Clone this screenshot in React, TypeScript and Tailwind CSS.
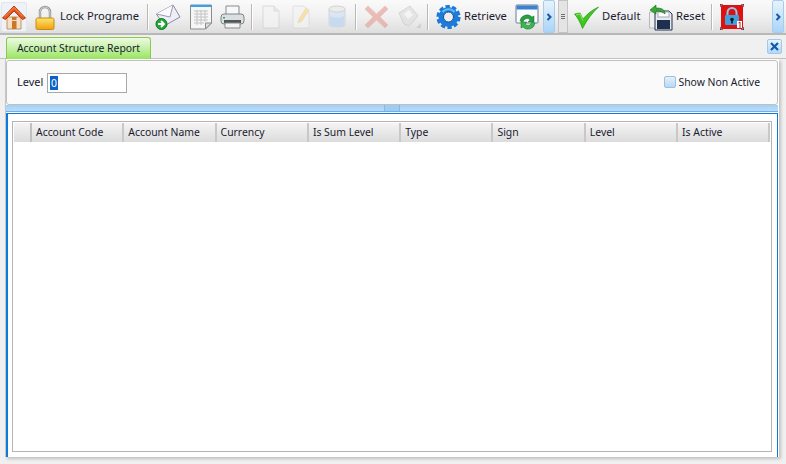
import React from "react";

const Home = () => (
  <svg width="24" height="26" viewBox="0 0 24 26">
    <path d="M5 13h14v12H5z" fill="#f6dfc4" stroke="#c09468" />
    <path d="M0.500 14 12 2l11.500 12-3 1.500L12 7 3.500 15.500z" fill="#e8541c" stroke="#b5400f" />
    <path d="M12 4 4 12l-2 1L12 3l10 10-2-1z" fill="#f89868" />
    <rect x="10" y="17" width="4.500" height="8" fill="#c87828" />
    <rect x="10" y="13" width="4.500" height="3" fill="#c87828" />
  </svg>
);
const Lock = () => (
  <svg width="20" height="26" viewBox="0 0 20 26">
    <path d="M5 14V8a5 5 0 0 1 10 0v6" fill="none" stroke="#8f8f8f" strokeWidth="2.400" />
    <path d="M5 14V8a5 5 0 0 1 10 0v6" fill="none" stroke="#e4e4e4" strokeWidth="0.800" />
    <defs>
      <linearGradient id="lk" x1="0" y1="0" x2="0" y2="1">
        <stop offset="0" stopColor="#fde66e" />
        <stop offset="1" stopColor="#f0a010" />
      </linearGradient>
    </defs>
    <rect x="1" y="14" width="18" height="11.500" rx="1.500" fill="url(#lk)" stroke="#c88a10" />
  </svg>
);
const Mail = () => (
  <svg width="26" height="28" viewBox="0 0 26 28">
    <path d="M1.500 11 18 2l7 12-16 9z" fill="#eeeef8" stroke="#8a8aa0" />
    <path d="M1.500 11 15 14l3-12" fill="#fbfbff" stroke="#9a9ab0" />
    <circle cx="6.500" cy="21" r="5.500" fill="#22a838" stroke="#0c7a20" />
    <path d="M3 21h5M6 18l3 3-3 3" stroke="#fff" strokeWidth="1.800" fill="none" />
  </svg>
);
const Sheet = () => (
  <svg width="24" height="28" viewBox="0 0 24 28">
    <path d="M1.500 2h21v18l-6 6h-15z" fill="#f6f6f6" stroke="#8c8c8c" />
    <rect x="2" y="2" width="20" height="2" fill="#3aa0e8" />
    <path d="M5 8h14M5 11h14M5 14h14M5 17h14M5 20h10M8 7v15M12 7v15M16 7v12" stroke="#c4c4c4" strokeWidth="1" />
    <path d="M16.500 26v-6h6z" fill="#dcdcdc" stroke="#8c8c8c" />
  </svg>
);
const Printer = () => (
  <svg width="25" height="26" viewBox="0 0 25 26">
    <path d="M6 11V2h13v9" fill="#f8f8f8" stroke="#8a8a8a" />
    <rect x="1" y="10" width="23" height="10" rx="3" fill="#dcdfe2" stroke="#7e8488" />
    <rect x="4" y="16" width="17" height="3" fill="#50585c" />
    <path d="M5 19h15v5H5z" fill="#f4f4f4" stroke="#8a8a8a" />
    <rect x="3" y="13" width="2" height="1.500" fill="#36b040" />
  </svg>
);
const Doc = () => (
  <svg width="18" height="26" viewBox="0 0 18 26" opacity="0.7">
    <path d="M1 2h11l5 5v17H1z" fill="#f4f4f4" stroke="#d0d0d0" />
    <path d="M12 2v5h5" fill="#e4e4e4" stroke="#d0d0d0" />
  </svg>
);
const PencilDoc = () => (
  <svg width="24" height="26" viewBox="0 0 24 26" opacity="0.7">
    <path d="M1 2h11l5 5v17H1z" fill="#f4f4f4" stroke="#d8d8d8" />
    <path d="M6 19l1-4 7-11 3 2-7 11z" fill="#f6dc8c" stroke="#e8d8a8" />
    <path d="M17 20h6v3h-6z" fill="#e8e8e8" />
  </svg>
);
const Cyl = () => (
  <svg width="18" height="26" viewBox="0 0 18 26">
    <path d="M1 5v16c0 2.500 16 2.500 16 0V5z" fill="#dce6f2" stroke="#d0d4d8" />
    <ellipse cx="9" cy="5" rx="8" ry="3" fill="#ececec" stroke="#d0d4d8" />
    <path d="M2 12c4 2 10 2 14 0v9c-3 2-11 2-14 0z" fill="#c8daf0" />
  </svg>
);
const XIcon = () => (
  <svg width="23" height="24" viewBox="0 0 23 24" opacity="0.6">
    <path d="M3 1 11.500 9 20 1l3 3-8 8 8 8-3 3-8.500-8L3 23l-3-3 8-8-8-8z" fill="#e89890" stroke="#d8b0a8" />
  </svg>
);
const Floppy = () => (
  <svg width="24" height="26" viewBox="0 0 24 26" opacity="0.7">
    <path d="M1 9 12 2l8 10-9 10-5-2z" fill="#e0e0e0" stroke="#c8c8c8" />
    <path d="M6 10l5-4 4 5-5 4z" fill="#f6f6f6" />
    <path d="M18 24l5-5v5z" fill="#c8c8c8" />
  </svg>
);
const Gear = () => (
  <svg width="25" height="26" viewBox="0 0 25 26">
    <circle cx="12.500" cy="13" r="10.400" fill="none" stroke="#1a78d8" strokeWidth="3.400" strokeDasharray="4.200 2.340" />
    <circle cx="12.500" cy="13" r="7.500" fill="none" stroke="#1c7cdc" strokeWidth="5" />
    <circle cx="12.500" cy="13" r="5" fill="#eeeeee" stroke="#0f4c90" />
    <path d="M6.500 8a7.800 7.800 0 0 1 12 0" stroke="#60bcf8" strokeWidth="2" fill="none" />
  </svg>
);
const Win = () => (
  <svg width="24" height="28" viewBox="0 0 24 28">
    <rect x="1" y="2" width="22" height="18" rx="1" fill="#fafcff" stroke="#6a7c94" />
    <rect x="1.500" y="2.500" width="21" height="4" fill="#3c80d0" />
    <path d="M5 18a7 7 0 0 1 12-4l2-1v6h-6l2-2a4 4 0 0 0-7 2z" fill="#28a040" stroke="#187028" strokeWidth="0.500" />
    <path d="M20 20a7 7 0 0 1-12 4l-2 1v-6h6l-2 2a4 4 0 0 0 7-2z" fill="#38b850" stroke="#187028" strokeWidth="0.500" />
  </svg>
);
const Check = () => (
  <svg width="25" height="24" viewBox="0 0 25 24">
    <path d="M0.500 9 6 8l3 6C13 9 18 5 24.500 2 18 8 13 15 8.500 23.500 6.500 18 4 13 0.500 9z" fill="#3cc81c" stroke="#1c8c10" strokeWidth="0.600" />
    <path d="M2 10l4-1 3 6.500" fill="none" stroke="#90ec60" />
  </svg>
);
const ResetIcon = () => (
  <svg width="24" height="28" viewBox="0 0 24 28">
    <path d="M0.500 9h8v16h-8z" fill="#f0f0f0" stroke="#b8b8b8" />
    <path d="M6 8h14l3 3v16H6z" fill="#e8eaf0" stroke="#20304c" />
    <rect x="8" y="17" width="13" height="9" fill="#1e3050" />
    <rect x="9" y="9" width="11" height="5" fill="#fff" stroke="#a0a8b8" />
    <path d="M1 7l6-5v3c5 0 9 1 9 6-2-2-5-3-9-3v3z" fill="#38a838" stroke="#186818" strokeWidth="0.600" />
  </svg>
);
const RedLock = () => (
  <svg width="24" height="26" viewBox="0 0 24 26">
    <rect x="1" y="1" width="22" height="24" rx="1" fill="#e01010" />
    <path d="M0 3V0h3M21 0h3v3M0 23v3h3M21 26h3v-3" stroke="#000" fill="none" />
    <path d="M7.500 12V8.500a4.500 4.500 0 0 1 9 0V12" fill="none" stroke="#8cc8ec" strokeWidth="2" />
    <rect x="5" y="11" width="14" height="10" rx="1" fill="#40a0dc" />
    <circle cx="12" cy="15.500" r="1.800" fill="#101820" />
    <rect x="11.200" y="15.500" width="1.600" height="4" fill="#101820" />
    <rect x="17" y="17" width="5" height="7" fill="#fff" />
    <path d="M18.500 19l1.500-1v6" stroke="#e01010" fill="none" />
  </svg>
);
const Chevrons = () => (
  <svg width="7" height="8" viewBox="0 0 7 8">
    <path d="M1.500 1 4.500 4l-3 3" fill="none" stroke="#1458a8" strokeWidth="2" />
  </svg>
);

const Divider = () => <div className="w-[2px] h-[26px] bg-[#b8b8b8] border-r border-white shrink-0" />;

const Overflow = () => (
  <div className="w-[12px] h-[33px] shrink-0 flex items-center justify-center rounded-[2px] border border-[#a8ccec] bg-gradient-to-b from-[#e8f3fc] to-[#a8d4f8]">
    <Chevrons />
  </div>
);

const columns = ["Account Code", "Account Name", "Currency", "Is Sum Level", "Type", "Sign", "Level", "Is Active"];

export default function App() {
  return (
    <div className="w-[786px] h-[464px] overflow-hidden bg-[#f0f0f0] flex flex-col text-[10.400px] text-[#1a1a30] font-['Noto_Sans',sans-serif]">
      {/* toolbar */}
      <div className="h-[35px] shrink-0 flex items-center border-b-2 border-[#b8b8b8] bg-gradient-to-b from-[#fafafa] via-[#f0f0f0] to-[#dedede] text-[11.200px]">
        <div className="ml-[1px] w-[26px] h-[30px] flex items-center justify-center rounded-[2px] border border-[#dfe6ee] bg-[#eef2f6] shrink-0"><Home /></div>
        <div className="ml-[8px] shrink-0"><Lock /></div>
        <span className="ml-[5px] w-[81px] whitespace-nowrap shrink-0">Lock Programe</span>
        <div className="ml-[6px]"><Divider /></div>
        <div className="ml-[6px] shrink-0"><Mail /></div>
        <div className="ml-[8px] shrink-0"><Sheet /></div>
        <div className="ml-[7px] shrink-0"><Printer /></div>
        <div className="ml-[6px]"><Divider /></div>
        <div className="ml-[9px] shrink-0"><Doc /></div>
        <div className="ml-[12px] shrink-0"><PencilDoc /></div>
        <div className="ml-[12px] shrink-0"><Cyl /></div>
        <div className="ml-[9px]"><Divider /></div>
        <div className="ml-[8px] shrink-0"><XIcon /></div>
        <div className="ml-[10px] shrink-0"><Floppy /></div>
        <div className="ml-[5px]"><Divider /></div>
        <div className="ml-[7px] shrink-0"><Gear /></div>
        <span className="ml-[3px] w-[43px] whitespace-nowrap shrink-0">Retrieve</span>
        <div className="ml-[8px] shrink-0"><Win /></div>
        <div className="ml-[4px]"><Overflow /></div>
        <div className="ml-[3px] w-[10px] h-[33px] shrink-0 flex flex-col items-center justify-center gap-[1px] border border-[#c4c4c4] bg-[#e4e4e4]">
          <div className="w-[4px] h-px bg-[#707070]" />
          <div className="w-[4px] h-px bg-[#707070]" />
          <div className="w-[4px] h-px bg-[#707070]" />
        </div>
        <div className="ml-[6px] shrink-0"><Check /></div>
        <span className="ml-[3px] w-[39px] whitespace-nowrap shrink-0">Default</span>
        <div className="ml-[8px] shrink-0"><ResetIcon /></div>
        <span className="ml-[3px] w-[29px] whitespace-nowrap shrink-0">Reset</span>
        <div className="ml-[6px]"><Divider /></div>
        <div className="ml-[7px] shrink-0"><RedLock /></div>
        <div className="ml-[28px]"><Overflow /></div>
      </div>

      {/* tab strip */}
      <div className="h-[24px] shrink-0 flex items-end relative border-b border-[#c0c0c0]">
        <div className="ml-[6px] w-[145px] h-[22px] -mb-px flex items-center justify-center rounded-t-[3px] border border-b-0 border-[#8cc850] bg-gradient-to-b from-[#eefae2] to-[#98e45c] whitespace-nowrap">
          Account Structure Report
        </div>
        <div className="absolute right-[4px] top-[4px] w-[15px] h-[15px] flex items-center justify-center rounded-[2px] border border-[#a0c8e8] bg-gradient-to-b from-[#e8f3fc] to-[#b0d8f8]">
          <svg width="9" height="9" viewBox="0 0 9 9"><path d="M1 1l7 7M8 1 1 8" stroke="#1458a8" strokeWidth="2.200" /></svg>
        </div>
      </div>

      {/* content */}
      <div className="ml-[5px] w-[774px] h-[398px] shrink-0 flex flex-col bg-white border-l border-[#c8c8c8] pr-px shadow-[2px_2px_3px_rgba(0,0,0,0.2)]">
        <div className="mt-px h-[45px] shrink-0 flex items-center justify-between bg-[#fafafa] border border-[#c0c0c0] rounded-[3px] pl-[10px] pr-[17px]">
          <div className="flex items-center gap-[4px]">
            <span className="w-[26px] text-[11px]">Level</span>
            <div className="w-[80px] h-[20px] border border-[#a8a8a8] bg-white flex items-center pl-[2px]">
              <span className="bg-[#0a64c8] text-white leading-[14px] px-px">0</span>
            </div>
          </div>
          <div className="flex items-center gap-[2px]">
            <div className="w-[12px] h-[12px] rounded-[2px] border border-[#9cc0e0] bg-gradient-to-b from-[#e4f0fa] to-[#b8d8f4]" />
            <span>Show Non Active</span>
          </div>
        </div>
        <div className="h-[7px] shrink-0 flex justify-center bg-gradient-to-b from-[#a0d0f8] to-[#bcdcf8] border-b border-[#70b0e8]">
          <div className="w-[16px] h-full border-x border-[#88b8e0] bg-[#a0ccf0]" />
        </div>
        <div className="flex-1 min-h-0 flex flex-col bg-white border-l-2 border-r border-t border-[#0a7ce0] mt-px pt-[7px] pl-[4px] pr-[5px] pb-[5px]">
          <div className="flex-1 min-h-0 border border-[#b4b4b4] bg-white p-px">
            <div className="h-[19px] flex bg-gradient-to-b from-[#f4f4f4] to-[#dcdcdc]">
              <div className="w-[18px] shrink-0 border-r-2 border-[#c0c0c0]" />
              {columns.map((c) => (
                <div key={c} className="w-[92.300px] shrink-0 border-r-2 border-[#c8c8c8] pl-[4px] flex items-center whitespace-nowrap">
                  {c}
                </div>
              ))}
            </div>
          </div>
        </div>
      </div>
    </div>
  );
}
